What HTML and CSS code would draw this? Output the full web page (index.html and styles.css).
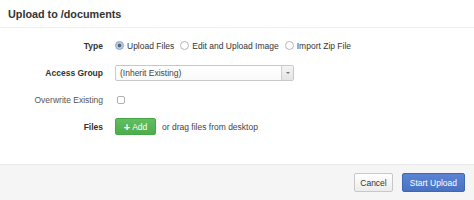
FILE: index.html
```html
<!DOCTYPE html>
<html lang="en">
<head>
    <meta charset="UTF-8">
    <meta name="viewport" content="width=device-width, initial-scale=1.0">
    <title>Upload to /documents</title>
    <link rel="stylesheet" href="styles.css">
</head>
<body>
    <div class="modal">
        <div class="modal-header">
            <h3>Upload to /documents</h3>
        </div>
        <div class="modal-body">
            <div class="row">
                <label class="field-label">Type</label>
                <div class="field">
                    <label class="choice"><input type="radio" name="type" checked> Upload Files</label>
                    <label class="choice"><input type="radio" name="type"> Edit and Upload Image</label>
                    <label class="choice"><input type="radio" name="type"> Import Zip File</label>
                </div>
            </div>
            <div class="row">
                <label class="field-label">Access Group</label>
                <div class="field">
                    <div class="select">
                        <span class="select-text">(Inherit Existing)</span>
                        <span class="select-arrow"></span>
                    </div>
                </div>
            </div>
            <div class="row">
                <label class="field-label light">Overwrite Existing</label>
                <div class="field">
                    <input type="checkbox" class="check">
                </div>
            </div>
            <div class="row">
                <label class="field-label">Files</label>
                <div class="field">
                    <button class="btn-add"><span class="plus">+</span>Add</button>
                    <span class="hint">or drag files from desktop</span>
                </div>
            </div>
        </div>
        <div class="modal-footer">
            <button class="btn">Cancel</button>
            <button class="btn btn-primary">Start Upload</button>
        </div>
    </div>
</body>
</html>
```

FILE: styles.css
```css
body {
    margin: 0;
    font-family: "Liberation Sans", Arial, sans-serif;
    font-size: 8.5px;
    color: #333;
    background: #fff;
}
.modal {
    width: 474px;
    height: 200px;
    display: flex;
    flex-direction: column;
}
.modal-header {
    padding: 7px 8px 6px;
    border-bottom: 1px solid #f0f0f0;
}
.modal-header h3 {
    margin: 0;
    font-size: 10.8px;
    line-height: 14px;
    font-weight: bold;
    color: #333;
}
.modal-body {
    padding: 4px 0 24px;
}
.row {
    display: flex;
    align-items: center;
    height: 27px;
}
.field-label {
    width: 103px;
    text-align: right;
    font-weight: bold;
    color: #333;
}
.field-label.light {
    font-weight: normal;
    color: #555;
}
.field {
    display: flex;
    align-items: center;
    margin-left: 12px;
}
.choice {
    display: flex;
    align-items: center;
    margin-right: 6px;
}
.choice input {
    appearance: none;
    width: 9px;
    height: 9px;
    margin: 0 3px 0 0;
    border: 1px solid #b5b5b5;
    border-radius: 50%;
    background: #fff;
    box-sizing: border-box;
}
.choice input:checked {
    border: 1px solid #8aa3c9;
    background: radial-gradient(circle, #5a6472 0, #5a6472 1.6px, #b9cbe6 2.2px);
}
.select {
    width: 179px;
    height: 16px;
    box-sizing: border-box;
    border: 1px solid #c8c8c8;
    border-radius: 2px;
    display: flex;
    align-items: center;
    background: linear-gradient(#fff, #fafafa);
}
.select-text {
    flex: 1;
    padding-left: 4px;
    color: #444;
}
.select-arrow {
    width: 11px;
    height: 14px;
    border-left: 1px solid #d0d0d0;
    background: linear-gradient(#f4f4f4, #e4e4e4);
    position: relative;
}
.select-arrow::after {
    content: "";
    position: absolute;
    left: 4px;
    top: 6px;
    border-left: 2px solid transparent;
    border-right: 2px solid transparent;
    border-top: 2px solid #777;
}
.check {
    appearance: none;
    width: 8px;
    height: 8px;
    margin: 0 0 0 2px;
    border: 1px solid #b0b0b0;
    border-radius: 2px;
    background: #fff;
    box-sizing: border-box;
}
.btn-add {
    width: 41px;
    height: 17px;
    border: 1px solid #45a845;
    border-radius: 2px;
    background: linear-gradient(#62bd62, #4cad4c);
    color: #fff;
    font-family: inherit;
    font-size: 8.5px;
    padding: 0;
    display: flex;
    align-items: center;
    justify-content: center;
}
.plus {
    font-weight: bold;
    font-size: 11px;
    margin-right: 2px;
}
.hint {
    margin-left: 6px;
    color: #444;
}
.modal-footer {
    flex: 1;
    background: #f5f5f5;
    border-top: 1px solid #e8e8e8;
    display: flex;
    justify-content: flex-end;
    align-items: flex-start;
    padding: 8px 9px 0;
    gap: 9px;
}
.btn {
    height: 19px;
    padding: 0 5px;
    font-family: inherit;
    font-size: 8.5px;
    color: #333;
    border: 1px solid #c8c8c8;
    border-radius: 2px;
    background: linear-gradient(#fff, #ececec);
}
.btn-primary {
    padding: 0 7px;
    color: #fff;
    border-color: #3f67b5;
    background: linear-gradient(#5a84d3, #4a72c2);
}
```
